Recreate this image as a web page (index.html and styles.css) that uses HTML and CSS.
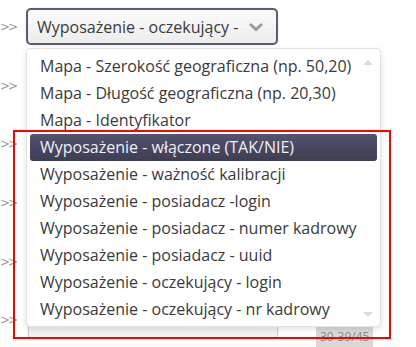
FILE: index.html
```html
<!DOCTYPE html>
<html lang="pl">
<head>
  <meta charset="UTF-8">
  <meta name="viewport" content="width=device-width, initial-scale=1.0">
  <title>Mapowanie pól</title>
  <link rel="stylesheet" href="styles.css">
</head>
<body>
  <div class="form">
    <div class="row">
      <span class="marker">&gt;&gt;</span>
      <div class="select">
        <span class="select-value">Wyposażenie - oczekujący -</span>
        <svg class="chevron" width="16" height="10" viewBox="0 0 16 10">
          <path d="M2 2 L8 7.5 L14 2" fill="none" stroke="#9a9a9a" stroke-width="3"/>
        </svg>
      </div>
    </div>
    <div class="row"><span class="marker">&gt;&gt;</span><div class="field"></div></div>
    <div class="row"><span class="marker">&gt;&gt;</span><div class="field"></div></div>
    <div class="row"><span class="marker">&gt;&gt;</span><div class="field"></div></div>
    <div class="row"><span class="marker">&gt;&gt;</span><div class="field"></div></div>
    <div class="row">
      <span class="marker">&gt;&gt;</span>
      <div class="field"></div>
      <span class="pager">30-39/45</span>
    </div>
  </div>

  <!-- open dropdown of the first select -->
  <ul class="dropdown">
    <li>Mapa - Szerokość geograficzna (np. 50,20)</li>
    <li>Mapa - Długość geograficzna (np. 20,30)</li>
    <li>Mapa - Identyfikator</li>
    <li class="active">Wyposażenie - włączone (TAK/NIE)</li>
    <li>Wyposażenie - ważność kalibracji</li>
    <li>Wyposażenie - posiadacz -login</li>
    <li>Wyposażenie - posiadacz - numer kadrowy</li>
    <li>Wyposażenie - posiadacz - uuid</li>
    <li>Wyposażenie - oczekujący - login</li>
    <li>Wyposażenie - oczekujący - nr kadrowy</li>
    <span class="scroll-up"></span>
    <span class="scroll-down"></span>
  </ul>

  <div class="highlight"></div>
</body>
</html>
```

FILE: styles.css
```css
* { box-sizing: border-box; margin: 0; padding: 0; }
body {
  font-family: "Open Sans", Arial, sans-serif;
  background: #fff;
  color: #333;
  width: 416px;
  height: 347px;
  overflow: hidden;
  position: relative;
}
/* Form rows */
.form { padding-top: 8px; }
.row {
  display: flex; align-items: center;
  height: 37px; margin-bottom: 21.7px;
}
.marker {
  width: 26px; padding-right: 13px;
  text-align: right;
  font-family: "DejaVu Sans", sans-serif;
  font-size: 12px; color: #9a9a9a;
  letter-spacing: -2px;
  white-space: nowrap;
  margin-top: 1px;
}
.select {
  width: 252px; height: 37px;
  border: 2px solid #5c5c70; border-radius: 5px;
  background: linear-gradient(#fbfbfb, #ececec);
  box-shadow: 0 0 1px rgba(80,80,110,0.5);
  display: flex; align-items: center; justify-content: space-between;
  padding: 0 12px 0 9px;
}
.select-value { font-size: 16px; color: #3a3a3a; }
.chevron { display: block; margin-top: 1px; }
.field {
  width: 250px; height: 37px; margin-left: 2px;
  border: 1px solid #cfcfcf; border-radius: 3px;
  background: linear-gradient(#fafafa, #f0f0f0);
  box-shadow: 0 1px 2px rgba(0,0,0,0.15);
}
.pager {
  align-self: flex-start;
  margin: 25px 0 0 38px;
  background: #d9d9d9; color: #8c8c8c;
  font-size: 12px; padding: 2px 4px;
  line-height: 18px;
}
/* Dropdown overlay */
.dropdown {
  position: absolute; left: 26px; top: 48px;
  width: 355px;
  list-style: none;
  background: #fff;
  border: 1px solid #e2e2e2; border-radius: 4px;
  box-shadow: 0 2px 6px rgba(0,0,0,0.12);
  padding: 4px 3px 3px;
}
.dropdown li {
  font-size: 16px; line-height: 27px;
  padding-left: 10px;
  color: #3a3a3a;
  white-space: nowrap;
}
.dropdown li.active {
  background: linear-gradient(#535370, #3d3d52);
  color: #f0f0f4;
  border-radius: 3px;
}
.scroll-up, .scroll-down {
  position: absolute; right: 7px;
  width: 0; height: 0;
  border-left: 5px solid transparent;
  border-right: 5px solid transparent;
}
.scroll-up { top: 11px; border-bottom: 5px solid #dcdcdc; }
.scroll-down { bottom: 9px; border-top: 5px solid #dcdcdc; }
/* Red annotation frame */
.highlight {
  position: absolute; left: 13px; top: 130px;
  width: 378px; height: 209px;
  border: 2px solid #f00;
  pointer-events: none;
}
```
